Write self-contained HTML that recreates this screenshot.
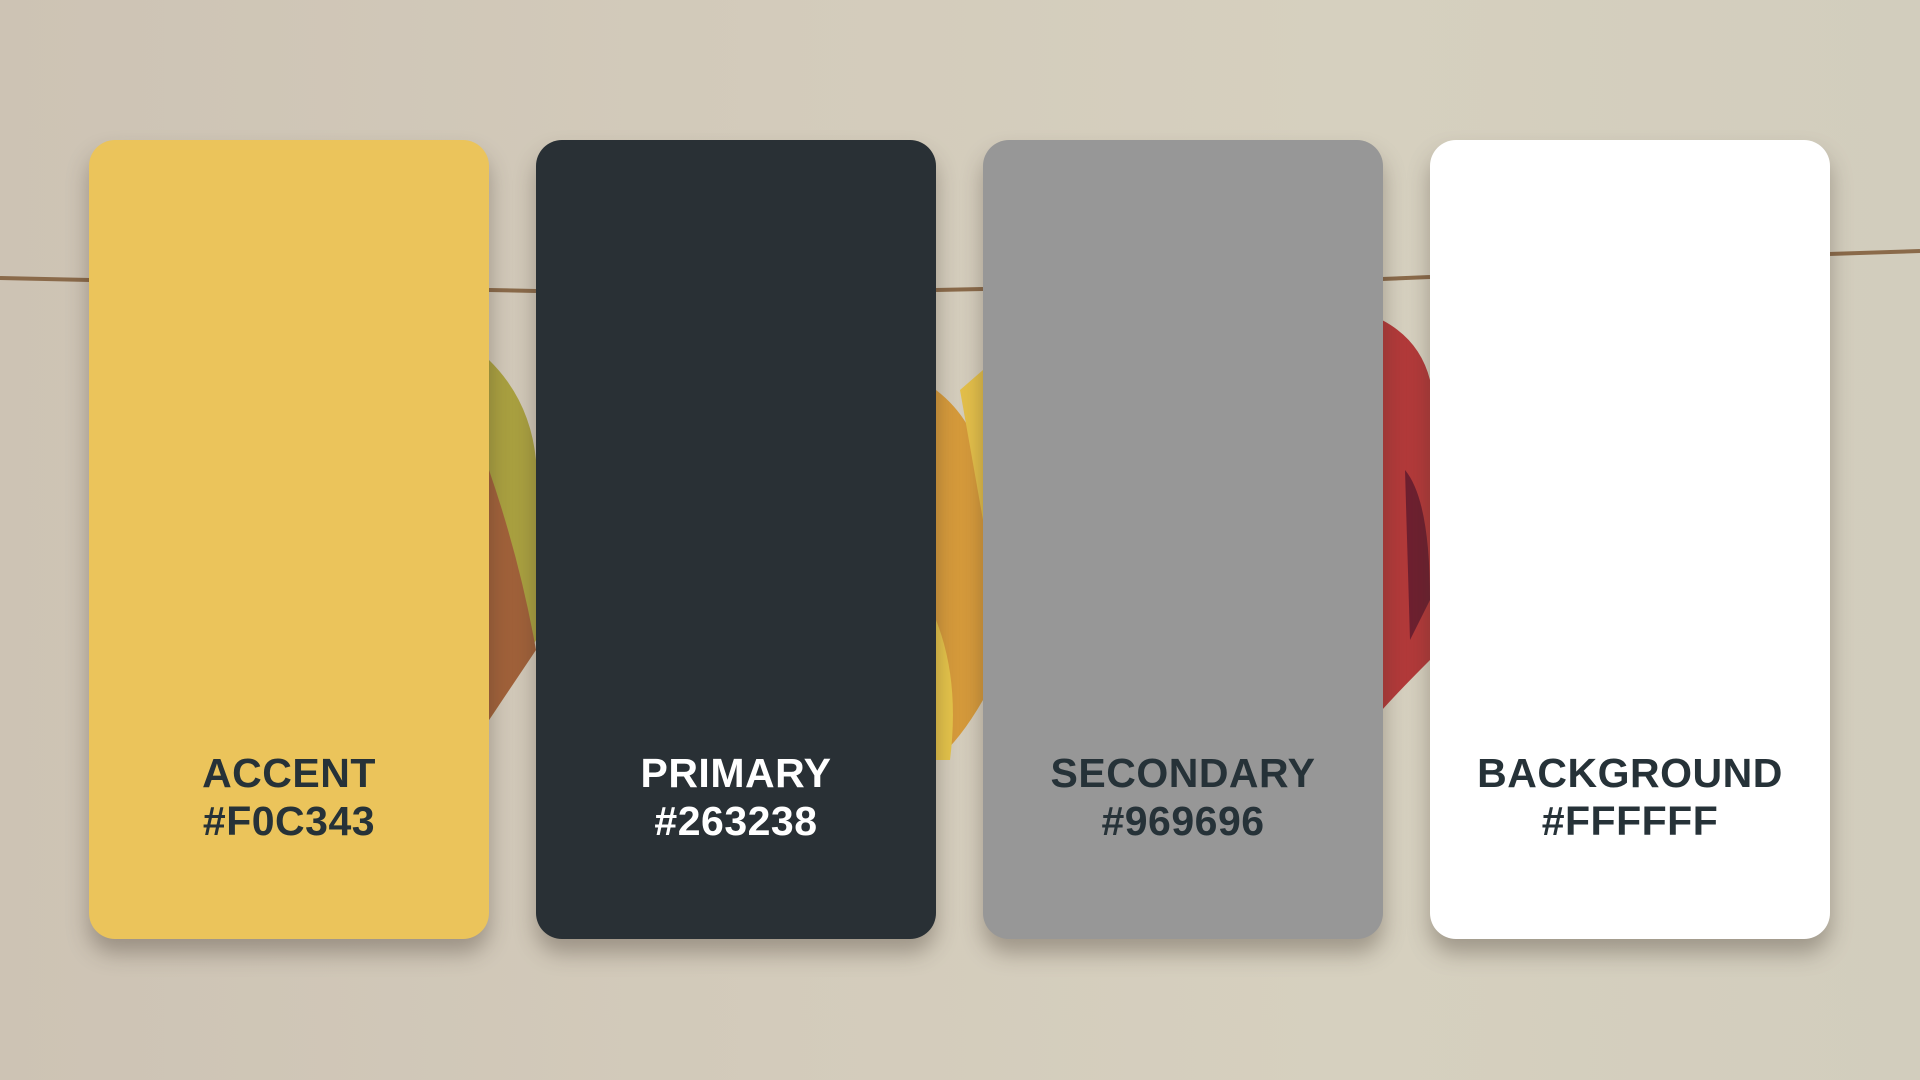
<!DOCTYPE html>
<html><head><meta charset="utf-8"><style>
html,body{margin:0;padding:0}
body{width:1920px;height:1080px;overflow:hidden;position:relative;
background:linear-gradient(90deg,#cdc3b4 0%,#d3cbbb 40%,#d6d0bf 70%,#d2cdbd 100%);font-family:"Liberation Sans",sans-serif}
.card{position:absolute;top:140px;width:400px;height:799px;border-radius:26px;box-shadow:0 14px 22px rgba(60,50,40,.35);
display:flex;flex-direction:column;align-items:center;justify-content:flex-end;padding-bottom:94px;box-sizing:border-box;
font-weight:bold;font-size:41px;line-height:48px;letter-spacing:0.5px;text-align:center}
svg{position:absolute;left:0;top:0}
</style></head><body>
<svg width="1920" height="1080">
<path d="M0 278 L90 280 M489 290 L536 291 M936 290 L983 289 M1382 279 L1430 277 M1829 254 L1920 251" stroke="#8a6a4a" stroke-width="4" fill="none"/>
<path d="M489 360 Q530 400 536 460 L536 640 Q510 690 489 720 Z" fill="#a9a040"/>
<path d="M489 470 Q520 560 536 650 L489 720 Z" fill="#a0613a"/>
<path d="M936 390 Q975 420 983 470 L983 700 Q960 740 936 760 Z" fill="#d59a3b"/>
<path d="M960 390 L983 370 L983 520 Z" fill="#e3bf4a"/>
<path d="M936 620 Q960 680 950 760 L936 760 Z" fill="#e4c34a"/>
<path d="M1382 320 Q1420 340 1430 380 L1430 660 Q1400 690 1382 710 Z" fill="#b23a3a"/>
<path d="M1405 470 Q1430 500 1430 600 L1410 640 Z" fill="#6e2030"/>
</svg>
<div class="card" style="left:89px;background:#ebc45b;color:#263238">ACCENT<br>#F0C343</div>
<div class="card" style="left:536px;background:#293035;color:#fff">PRIMARY<br>#263238</div>
<div class="card" style="left:983px;background:#979797;color:#263238">SECONDARY<br>#969696</div>
<div class="card" style="left:1430px;background:#fff;color:#263238">BACKGROUND<br>#FFFFFF</div>
</body></html>
